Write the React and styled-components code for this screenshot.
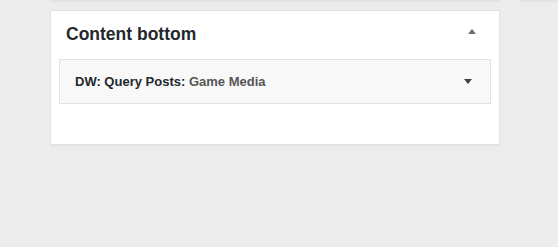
import React from 'react'
import styled, { createGlobalStyle } from 'styled-components'

const GlobalStyle = createGlobalStyle`
  html, body {
    margin: 0;
    padding: 0;
    background: #ececec;
    font-family: "Liberation Sans", Arial, sans-serif;
    color: #23282d;
  }
`

const Columns = styled.div`
  display: flex;
  gap: 20px;
  padding-left: 50px;
  overflow: hidden;
  height: 247px;
`

const Column = styled.div`
  flex: 0 0 ${p => p.$width}px;
  display: flex;
  flex-direction: column;
`

// bottom edge of the panel that sits above, scrolled out of view
const PanelStub = styled.div`
  height: 0;
  border-bottom: 1px solid #e2e2e2;
  box-shadow: 0 1px 1px rgba(0, 0, 0, 0.04);
  margin-bottom: 9px;
`

const Panel = styled.div`
  background: #fff;
  border: 1px solid #e2e2e2;
  box-shadow: 0 1px 1px rgba(0, 0, 0, 0.04);
`

const PanelHeader = styled.div`
  box-sizing: border-box;
  height: 48px;
  display: flex;
  align-items: flex-start;
  justify-content: space-between;
  padding: 10px 23px 0 15px;
`

const PanelTitle = styled.h2`
  margin: 5px 0 0;
  font-size: 17.5px;
  line-height: 1;
  font-weight: 700;
  color: #23282d;
`

const Toggle = styled.span`
  display: flex;
  align-items: center;
  justify-content: center;
  width: 8px;
  height: ${p => p.$height}px;
  color: ${p => p.$color};
`

const PanelBody = styled.div`
  padding: 0 8px 40px;
`

const Widget = styled.div`
  display: flex;
  align-items: center;
  justify-content: space-between;
  background: #f8f8f8;
  border: 1px solid #e2e2e2;
  padding: 15px 18px 15px 15px;
`

const WidgetTitle = styled.h3`
  margin: 0;
  font-size: 13px;
  line-height: 13px;
  font-weight: 700;
  color: #23282d;
  white-space: nowrap;
`

const InTitle = styled.span`
  color: #555;
`

const Arrow = ({ up, color, height }) => (
  <Toggle $color={color} $height={height}>
    <svg width="8" height="5" viewBox="0 0 8 5">
      <polygon
        points={up ? '4,0 8,5 0,5' : '0,0 8,0 4,5'}
        fill="currentColor"
      />
    </svg>
  </Toggle>
)

export default function App() {
  return (
    <>
      <GlobalStyle />
      <Columns>
        <Column $width={450}>
          <PanelStub />
          <Panel>
            <PanelHeader>
              <PanelTitle>Content bottom</PanelTitle>
              <Arrow up color="#6a6e72" height={20} />
            </PanelHeader>
            <PanelBody>
              <Widget>
                <WidgetTitle>
                  DW: Query Posts: <InTitle>Game Media</InTitle>
                </WidgetTitle>
                <Arrow color="#3c4147" height={13} />
              </Widget>
            </PanelBody>
          </Panel>
        </Column>
        <Column $width={450}>
          <PanelStub />
        </Column>
      </Columns>
    </>
  )
}
